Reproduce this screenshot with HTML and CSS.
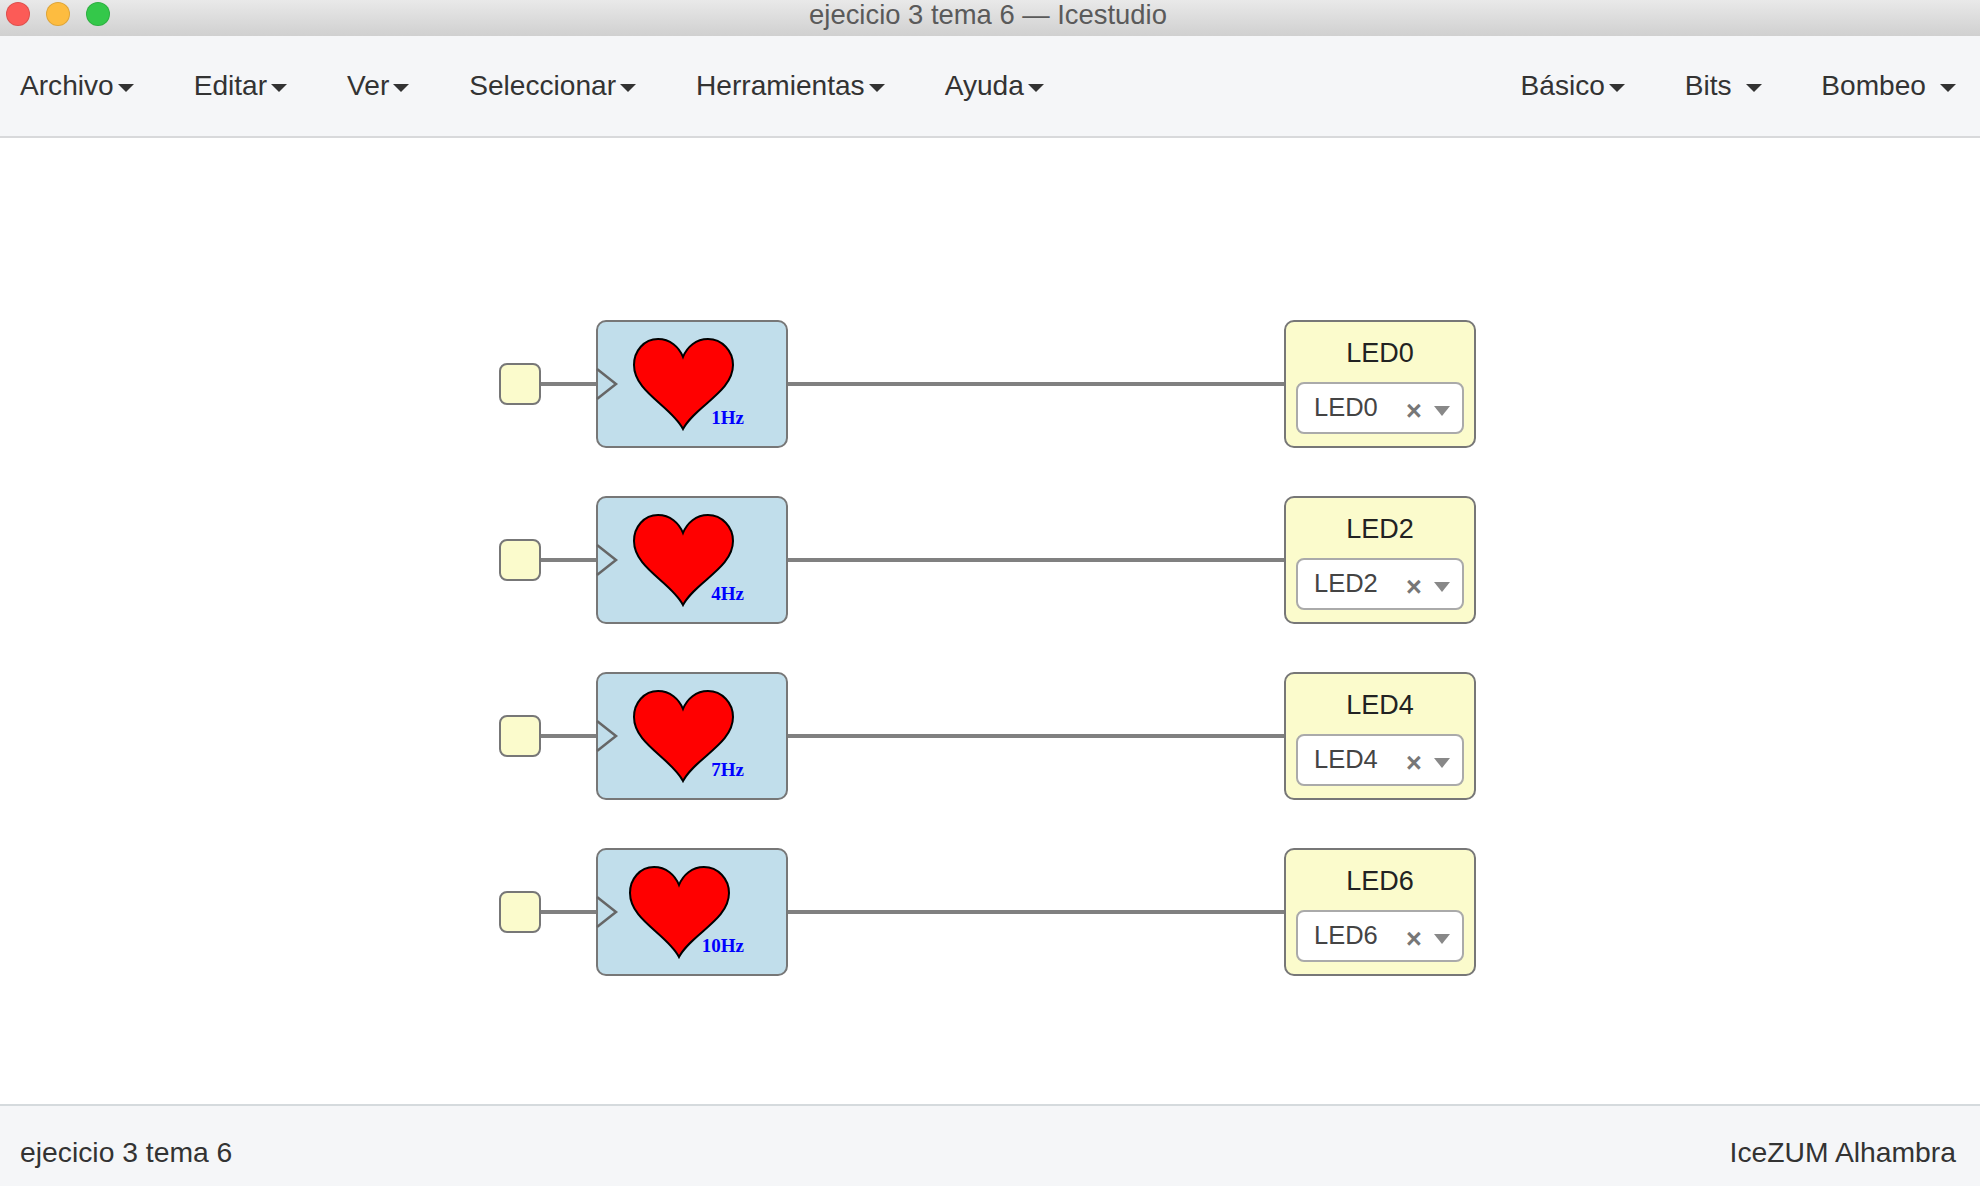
FILE: index.html
```html
<!DOCTYPE html>
<html lang="es">
<head>
<meta charset="utf-8">
<title>ejecicio 3 tema 6 — Icestudio</title>
<link rel="stylesheet" href="styles.css">
</head>
<body>
<div class="app">
  <header class="titlebar">
    <div class="lights"><span class="light red"></span><span class="light yellow"></span><span class="light green"></span></div>
    <div class="title">ejecicio 3 tema 6 — Icestudio</div>
  </header>
  <nav class="menu">
    <div class="menu-group">
      <div class="item">Archivo<span class="caret"></span></div>
      <div class="item">Editar<span class="caret"></span></div>
      <div class="item">Ver<span class="caret"></span></div>
      <div class="item">Seleccionar<span class="caret"></span></div>
      <div class="item">Herramientas<span class="caret"></span></div>
      <div class="item">Ayuda<span class="caret"></span></div>
    </div>
    <div class="menu-group right">
      <div class="item">Básico<span class="caret"></span></div>
      <div class="item wide">Bits<span class="caret"></span></div>
      <div class="item wide">Bombeo<span class="caret"></span></div>
    </div>
  </nav>
  <main class="canvas">
    <div class="row">
      <div class="pin"></div><div class="wire short"></div>
      <div class="block clock">
        <svg class="art" viewBox="0 0 190 126"><polyline class="clk" points="0,48 19,63 0,78"/><path class="heart" d="M86 36C82 26 73 18 61 18C47 18 37 30 37 44C37 71 74 85 86 108C98 85 136 71 136 44C136 30 125 18 111 18C99 18 90 26 86 36Z"/><text class="hz" x="147" y="103">1Hz</text></svg>
      </div>
      <div class="wire long"></div>
      <div class="block led"><div class="led-name">LED0</div><div class="select"><span class="value">LED0</span><span class="clear">×</span><span class="arrow"></span></div></div>
    </div>
    <div class="row">
      <div class="pin"></div><div class="wire short"></div>
      <div class="block clock">
        <svg class="art" viewBox="0 0 190 126"><polyline class="clk" points="0,48 19,63 0,78"/><path class="heart" d="M86 36C82 26 73 18 61 18C47 18 37 30 37 44C37 71 74 85 86 108C98 85 136 71 136 44C136 30 125 18 111 18C99 18 90 26 86 36Z"/><text class="hz" x="147" y="103">4Hz</text></svg>
      </div>
      <div class="wire long"></div>
      <div class="block led"><div class="led-name">LED2</div><div class="select"><span class="value">LED2</span><span class="clear">×</span><span class="arrow"></span></div></div>
    </div>
    <div class="row">
      <div class="pin"></div><div class="wire short"></div>
      <div class="block clock">
        <svg class="art" viewBox="0 0 190 126"><polyline class="clk" points="0,48 19,63 0,78"/><path class="heart" d="M86 36C82 26 73 18 61 18C47 18 37 30 37 44C37 71 74 85 86 108C98 85 136 71 136 44C136 30 125 18 111 18C99 18 90 26 86 36Z"/><text class="hz" x="147" y="103">7Hz</text></svg>
      </div>
      <div class="wire long"></div>
      <div class="block led"><div class="led-name">LED4</div><div class="select"><span class="value">LED4</span><span class="clear">×</span><span class="arrow"></span></div></div>
    </div>
    <div class="row">
      <div class="pin"></div><div class="wire short"></div>
      <div class="block clock">
        <svg class="art" viewBox="0 0 190 126"><polyline class="clk" points="0,48 19,63 0,78"/><path class="heart" transform="translate(-4 0)" d="M86 36C82 26 73 18 61 18C47 18 37 30 37 44C37 71 74 85 86 108C98 85 136 71 136 44C136 30 125 18 111 18C99 18 90 26 86 36Z"/><text class="hz" x="147" y="103">10Hz</text></svg>
      </div>
      <div class="wire long"></div>
      <div class="block led"><div class="led-name">LED6</div><div class="select"><span class="value">LED6</span><span class="clear">×</span><span class="arrow"></span></div></div>
    </div>
  </main>
  <footer class="status">
    <span>ejecicio 3 tema 6</span>
    <span>IceZUM Alhambra</span>
  </footer>
</div>
</body>
</html>
```
FILE: styles.css
```css
* { box-sizing: border-box; }
html, body { margin: 0; padding: 0; }
body { font-family: "Liberation Sans", Arial, sans-serif; color: #333; background: #fff; overflow: hidden; }
.app { width: 1980px; height: 1186px; display: flex; flex-direction: column; }

.titlebar { height: 36px; flex: none; display: flex; align-items: center; justify-content: center; position: relative; background: linear-gradient(#e9e9e9, #d0d0d0); }
.lights { position: absolute; left: 6px; top: 2px; display: flex; gap: 16px; }
.light { width: 24px; height: 24px; border-radius: 50%; border: 1px solid rgba(0,0,0,.12); }
.red { background: #fc5b57; }
.yellow { background: #fdbc40; }
.green { background: #34c84a; }
.title { font-size: 27.4px; color: #5a5a5a; margin: -6px 4px 0 0; }

.menu { height: 102px; flex: none; display: flex; justify-content: space-between; align-items: center; padding: 0 24px 0 20px; background: #f5f6f8; border-bottom: 2px solid #d8d9db; font-size: 28.1px; }
.menu-group { display: flex; gap: 60px; }
.menu-group.right { gap: 59.8px; }
.item { display: flex; align-items: center; white-space: nowrap; }
.caret { width: 0; height: 0; margin-left: 4px; margin-top: 4px; border-left: 8px solid transparent; border-right: 8px solid transparent; border-top: 8px solid #333; }
.wide .caret { margin-left: 14px; }

.canvas { flex: 1; background: #fff; display: flex; flex-direction: column; gap: 48px; padding: 182px 0 0 499px; }
.row { display: flex; align-items: center; height: 128px; }
.pin { width: 42px; height: 42px; background: #fbfbcc; border: 2px solid #777; border-radius: 8px; }
.wire { height: 4px; background: #808080; }
.wire.short { width: 55px; }
.wire.long { width: 496px; }
.block { width: 192px; height: 128px; border: 2px solid #777; border-radius: 10px; position: relative; flex: none; }
.clock { background: #c1deeb; }
.led { background: #fbfbcc; display: flex; flex-direction: column; align-items: center; padding: 0 10px; }
.art { position: absolute; left: -1px; top: -1px; width: 190px; height: 126px; overflow: visible; }
.clk { fill: none; stroke: #666; stroke-width: 2.5; }
.heart { fill: #f00; stroke: #000; stroke-width: 2; }
.hz { font-family: "Liberation Serif", "Times New Roman", serif; font-weight: 700; font-size: 19px; fill: #00f; text-anchor: end; }
.led-name { font-size: 27px; line-height: 32px; margin-top: 15px; color: #222; }
.select { width: 168px; height: 52px; margin-top: 13px; flex: none; background: #fff; border: 2px solid #aaa; border-radius: 8px; display: flex; align-items: center; position: relative; padding-left: 16px; }
.value { font-size: 25.5px; color: #444; margin-top: -1px; }
.clear { position: absolute; left: 108px; top: 12px; font-size: 27px; line-height: 30px; font-weight: 700; color: #777; }
.arrow { position: absolute; left: 136px; top: 22px; width: 0; height: 0; border-left: 8px solid transparent; border-right: 8px solid transparent; border-top: 10px solid #888; }

.status { flex: none; height: 82px; background: #f5f6f8; border-top: 2px solid #d5dadd; display: flex; justify-content: space-between; align-items: center; padding: 12px 24px 0 20px; font-size: 28.3px; }
```
